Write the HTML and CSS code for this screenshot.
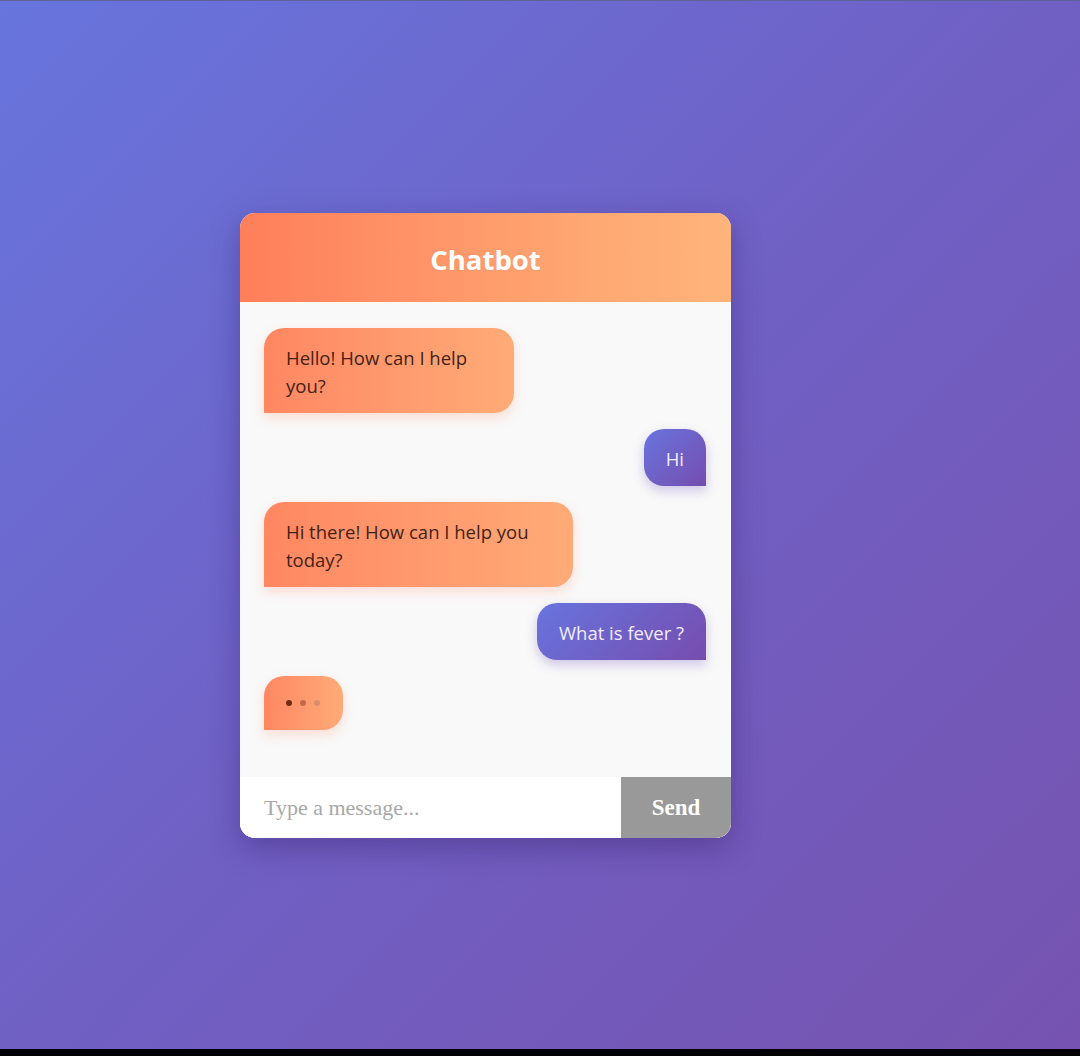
FILE: index.html
```html
<!DOCTYPE html>
<html>
<head>
<meta charset="utf-8">
<link rel="stylesheet" href="styles.css">
</head>
<body>
<div class="page">
  <div class="chat">
    <div class="chat-header">Chatbot</div>
    <div class="chat-body">
      <div class="msg bot narrow">Hello! How can I help you?</div>
      <div class="msg user">Hi</div>
      <div class="msg bot wide">Hi there! How can I help you today?</div>
      <div class="msg user">What is fever ?</div>
      <div class="msg bot typing"><span class="dot d1"></span><span class="dot d2"></span><span class="dot d3"></span></div>
    </div>
    <div class="chat-input">
      <input class="input" type="text" placeholder="Type a message...">
      <button class="send">Send</button>
    </div>
  </div>
</div>
<div class="bottom-bar"></div>
</body>
</html>
```
FILE: styles.css
```css
html, body {
  margin: 0;
  padding: 0;
  background: #000;
}
.page {
  height: 1049px;
  border-top: 1px solid #5d6299;
  background: linear-gradient(135deg, #6775dd 0%, #7060c4 50%, #7653b0 100%);
  display: flex;
  align-items: flex-start;
  padding-left: 240px;
  padding-top: 212px;
  box-sizing: border-box;
}
.bottom-bar {
  height: 7px;
  background: #000;
}
.chat {
  width: 491px;
  border-radius: 15px;
  overflow: hidden;
  background: #f9f9f9;
  box-shadow: 0 10px 30px rgba(40, 20, 90, 0.35);
  display: flex;
  flex-direction: column;
}
.chat-header {
  height: 89px;
  padding-top: 3px;
  box-sizing: border-box;
  background: linear-gradient(90deg, #ff7f5b 0%, #fea772 70%, #ffb47b 100%);
  color: #fff;
  font-family: "Open Sans", "Noto Sans", sans-serif;
  font-weight: 700;
  font-size: 27.5px;
  display: flex;
  align-items: center;
  justify-content: center;
}
.chat-body {
  height: 475px;
  box-sizing: border-box;
  padding: 26px 24px 20px 24px;
  display: flex;
  flex-direction: column;
  gap: 16px;
  background: #f9f9f9;
}
.msg {
  font-family: "Open Sans", "Noto Sans", sans-serif;
  font-size: 18.5px;
  line-height: 28px;
  padding: 16px 22px 13px 22px;
  box-sizing: border-box;
}
.bot {
  align-self: flex-start;
  background: linear-gradient(90deg, #ff8762 0%, #ffab78 100%);
  color: #432318;
  border-radius: 20px 20px 20px 0;
  box-shadow: 0 5px 12px rgba(255, 140, 100, 0.25);
}
.narrow { width: 250px; }
.wide { width: 309px; }
.user {
  align-self: flex-end;
  background: linear-gradient(135deg, #6874de 0%, #764dae 100%);
  color: #f1ecff;
  border-radius: 20px 20px 0 20px;
  margin-right: 1px;
  box-shadow: 0 5px 12px rgba(110, 80, 190, 0.3);
}
.typing {
  width: 79px;
  height: 54px;
  display: flex;
  align-items: center;
  gap: 8px;
  padding: 0 0 0 22px;
}
.dot {
  width: 6px;
  height: 6px;
  border-radius: 50%;
}
.d1 { background: #6e2c16; }
.d2 { background: #c46a4a; }
.d3 { background: #d98f6d; }
.chat-input {
  display: flex;
  height: 61px;
  background: #fff;
}
.input {
  flex: 1;
  border: none;
  outline: none;
  padding: 0 0 0 24px;
  font-family: "Liberation Serif", serif;
  font-size: 22px;
  color: #333;
  background: #fff;
  min-width: 0;
}
.input::placeholder {
  color: #a8a8a8;
}
.send {
  width: 110px;
  border: none;
  background: #999999;
  color: #fff;
  font-family: "Liberation Serif", serif;
  font-weight: 700;
  font-size: 23px;
  padding: 0;
}
```
